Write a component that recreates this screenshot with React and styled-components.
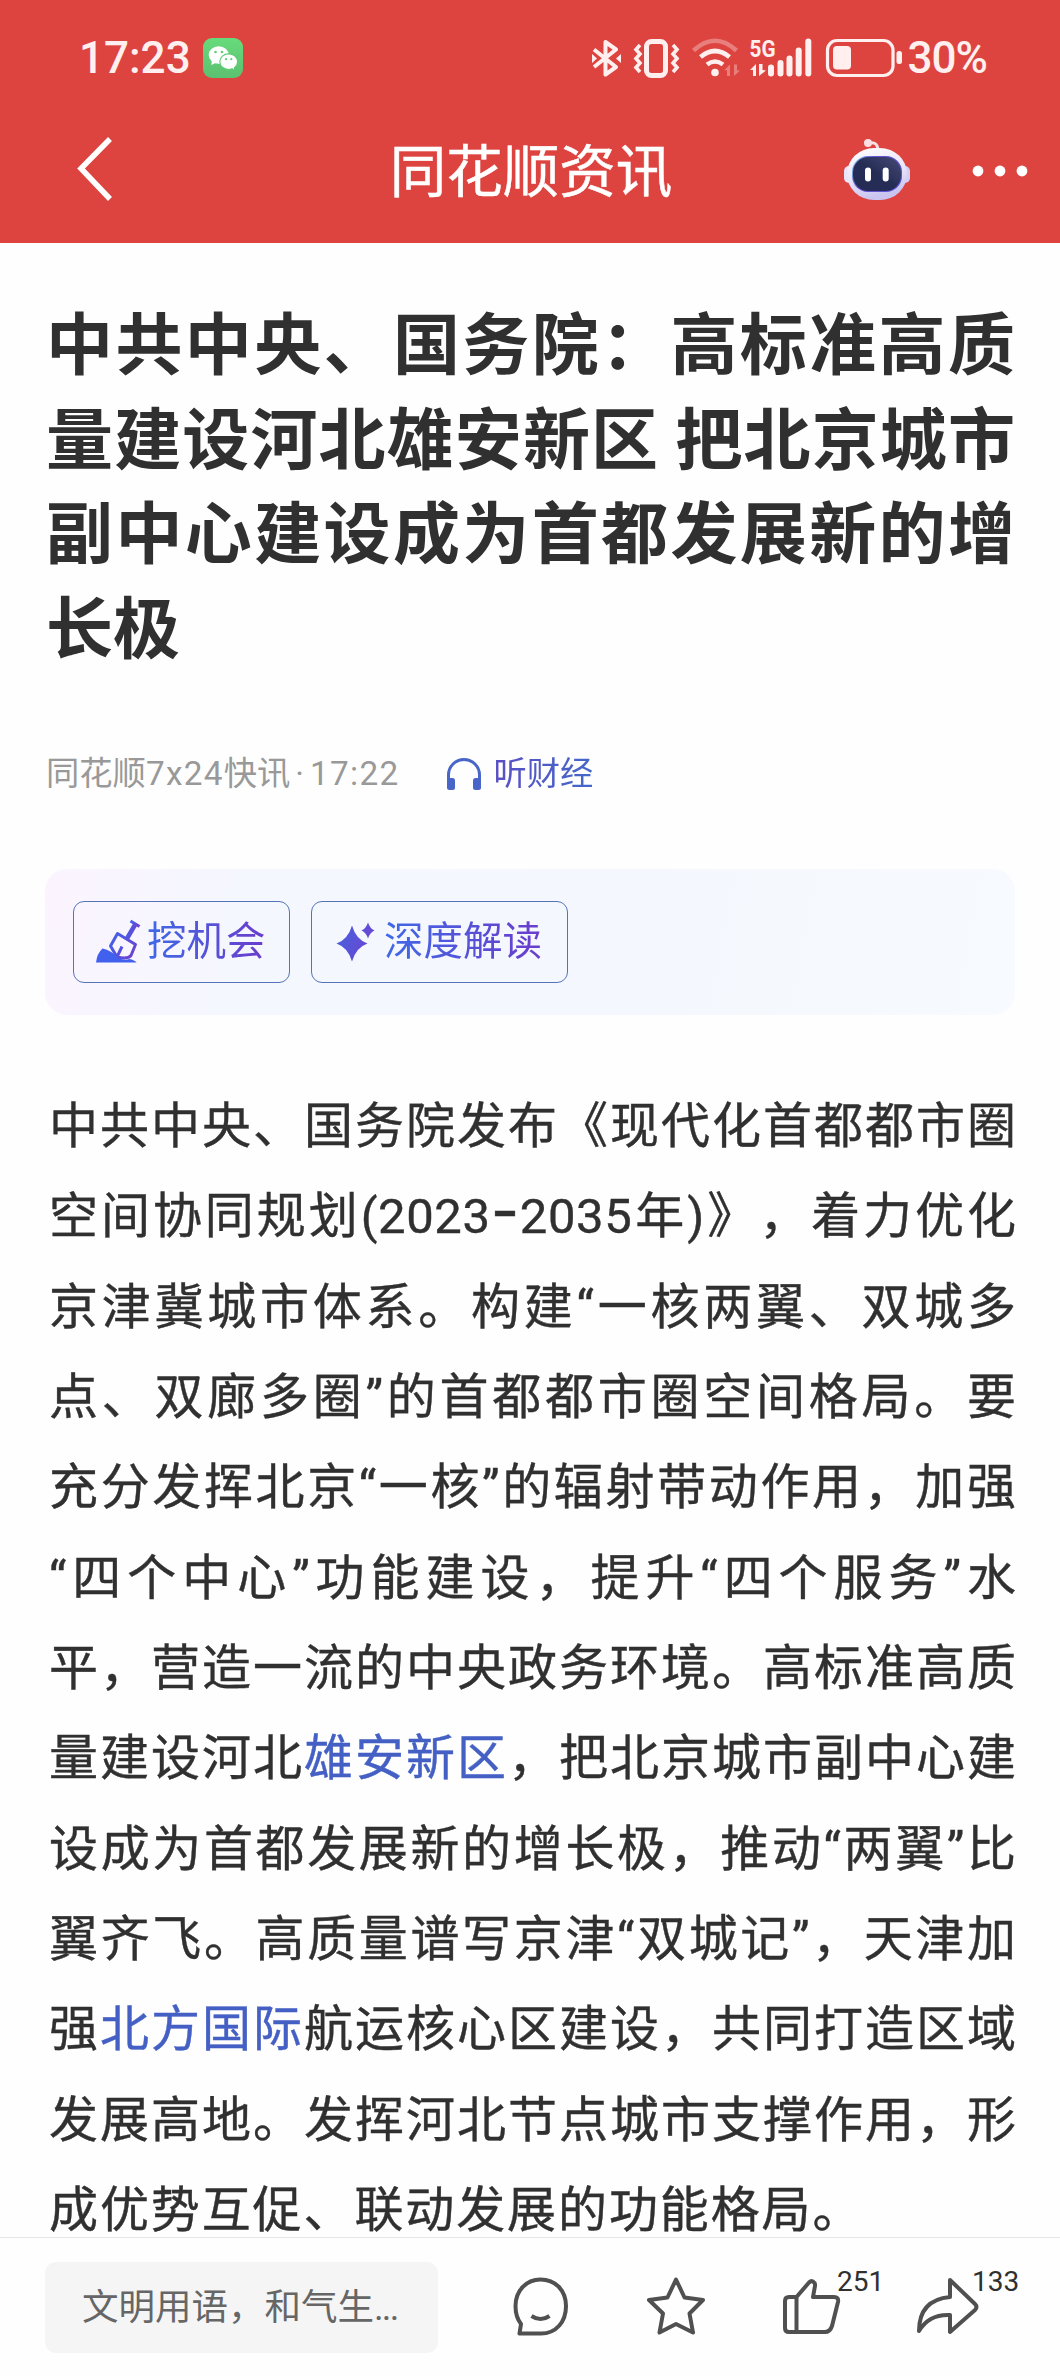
import styled, { createGlobalStyle, css } from 'styled-components'

const GlobalStyle = createGlobalStyle`
  body {
    margin: 0;
    background: #fff;
  }
  * {
    box-sizing: border-box;
  }
`

const Screen = styled.div`
  display: flex;
  flex-direction: column;
  width: 1060px;
  height: 2376px;
  overflow: hidden;
  color: #303030;
  background: #fefefe;
  font-family: Roboto, 'Noto Sans CJK SC', sans-serif;
  text-spacing-trim: space-all;
`

/* header */
const Header = styled.header`
  flex: none;
  height: 243px;
  background: #dd4440;
  color: #fff;
`

const StatusBar = styled.div`
  display: flex;
  align-items: center;
  justify-content: space-between;
  height: 116px;
  padding: 0 73px 0 79px;
`

const StatusGroup = styled.div`
  display: flex;
  align-items: center;
  color: #ffefee;
`

const StatusText = styled.span`
  font-size: 44px;
  font-weight: 500;
  line-height: 44px;
  letter-spacing: ${(props) => props.$spacing || 0}px;
`

const NavBar = styled.div`
  display: grid;
  grid-template-columns: 300px 1fr 300px;
  align-items: center;
  height: 110px;
`

const NavTitle = styled.h1`
  margin: 0;
  padding: 4px 0 0 2px;
  text-align: center;
  font-size: 56.5px;
  font-weight: 400;
  line-height: 64px;
  -webkit-text-stroke: 0.5px currentColor;
`

const NavActions = styled.div`
  display: flex;
  align-items: center;
  gap: 61px;
  padding-left: 83px;
`

const Svg = styled.svg`
  display: block;
  flex: none;
  overflow: visible;
  margin-left: ${(props) => props.$left || 0}px;
`

/* article */
const Article = styled.main`
  flex: 1;
  min-height: 0;
  padding: 50px 45px 0 46px;
`

const Line = styled.span`
  display: block;
  white-space: nowrap;
  text-align: justify;
  text-align-last: ${(props) => (props.$last ? 'left' : 'justify')};
`

const Title = styled.h2`
  margin: 0;
  color: #303030;
  font-family: 'Noto Sans CJK SC', sans-serif;
  font-size: 67px;
  font-weight: 700;
  line-height: 94.7px;
`

const Meta = styled.div`
  display: flex;
  align-items: center;
  height: 40px;
  margin-top: 82px;
  color: #999;
  font-size: 33.3px;
  line-height: 40px;
`

const MetaNumber = styled.span`
  letter-spacing: 1.3px;
`

const MetaDot = styled.span`
  margin: 0 6px 0 5px;
`

const gradientText = css`
  background: linear-gradient(90deg, ${(props) => props.$from}, ${(props) => props.$to});
  background-clip: text;
  -webkit-background-clip: text;
  color: transparent;
`

const Listen = styled.span`
  display: flex;
  align-items: center;
  gap: 11px;
  margin-left: 47px;
`

const ListenText = styled.span`
  ${gradientText}
`

const Panel = styled.div`
  display: flex;
  align-items: center;
  gap: 21px;
  width: 970px;
  height: 146px;
  margin: 75px 0 0 -1px;
  padding: 0 28px 0 28px;
  border-radius: 22px;
  background: linear-gradient(100deg, #fbf4fe 0%, #f5f7fe 20%, #f4f8fe 60%, #f7fbff 100%);
`

const PanelButton = styled.button`
  display: flex;
  align-items: center;
  width: ${(props) => props.$width}px;
  height: 82px;
  padding: 0 0 0 21px;
  border: 1.5px solid #5574b8;
  border-radius: 11px;
  background: transparent;
  font-family: inherit;
`

const PanelLabel = styled.span`
  font-size: 39.5px;
  line-height: 50px;
  ${gradientText}
`

const Body = styled.p`
  margin: 67px 0 0 3px;
  width: 967px;
  font-size: 49px;
  line-height: 90.35px;
  -webkit-text-stroke: 0.4px currentColor;
`

const Keyword = styled.a`
  color: #4460c4;
`

const Years = styled.span`
  letter-spacing: 0.6px;
`

const Dash = styled.span`
  font-family: Inter, sans-serif;
  font-size: 62px;
  line-height: 0;
`

/* bottom bar */
const BottomBar = styled.footer`
  position: relative;
  flex: none;
  display: flex;
  align-items: center;
  height: 139px;
  border-top: 1px solid #e6e6e6;
  padding-left: 45px;
  background: #fefefe;
`

const CommentInput = styled.div`
  display: flex;
  align-items: center;
  width: 393px;
  height: 91px;
  padding: 0 0 5px 37px;
  border-radius: 11px;
  background: #f5f5f5;
  color: #666;
  font-size: 36.5px;
  white-space: nowrap;
`

const Ellipsis = styled.span`
  letter-spacing: -1.8px;
`

const Action = styled.div`
  position: relative;
  margin: 0 0 2px ${(props) => props.$left}px;
`

const Count = styled.span`
  position: absolute;
  left: ${(props) => props.$x}px;
  top: -8px;
  color: #303030;
  font-size: 28px;
  line-height: 30px;
`

const titleLines = [
  '中共中央、国务院：高标准高质',
  '量建设河北雄安新区 把北京城市',
  '副中心建设成为首都发展新的增',
  '长极',
]

const bodyLines = [
  '中共中央、国务院发布《现代化首都都市圈',
  <>
    空间协同规划
    <Years>
      (2023<Dash>-</Dash>2035
    </Years>
    年)》，着力优化
  </>,
  '京津冀城市体系。构建“一核两翼、双城多',
  '点、双廊多圈”的首都都市圈空间格局。要',
  '充分发挥北京“一核”的辐射带动作用，加强',
  '“四个中心”功能建设，提升“四个服务”水',
  '平，营造一流的中央政务环境。高标准高质',
  <>
    量建设河北<Keyword>雄安新区</Keyword>，把北京城市副中心建
  </>,
  '设成为首都发展新的增长极，推动“两翼”比',
  '翼齐飞。高质量谱写京津“双城记”，天津加',
  <>
    强<Keyword>北方国际</Keyword>航运核心区建设，共同打造区域
  </>,
  '发展高地。发挥河北节点城市支撑作用，形',
  '成优势互促、联动发展的功能格局。',
]

const LastBodyLine = styled(Line)`
  letter-spacing: 1.9px;
`

function WechatIcon() {
  return (
    <Svg $left={12} width='40' height='40' viewBox='0 0 40 40'>
      <defs>
        <linearGradient id='wechat' x1='0' y1='0' x2='0' y2='1'>
          <stop offset='0' stopColor='#67db7c' />
          <stop offset='1' stopColor='#5cc070' />
        </linearGradient>
      </defs>
      <rect width='40' height='40' rx='9' fill='url(#wechat)' />
      <path d='M9 22l-.6 5 5-2.500z' fill='#fff' />
      <ellipse cx='15.700' cy='17' rx='10' ry='8.700' fill='#fff' />
      <ellipse cx='25.500' cy='23.500' rx='9.200' ry='8.200' fill='#61cd76' />
      <ellipse cx='25.700' cy='23.700' rx='8.300' ry='7.300' fill='#fff' />
      <path d='M28 29l3 2.500-.3-5z' fill='#fff' />
      <circle cx='12.500' cy='14' r='1.300' fill='#61cd76' />
      <circle cx='19' cy='14' r='1.300' fill='#61cd76' />
      <circle cx='23' cy='21.200' r='1.100' fill='#61cd76' />
      <circle cx='28.300' cy='21.200' r='1.100' fill='#61cd76' />
    </Svg>
  )
}

function StatusIcons() {
  return (
    <Svg width='314' height='48' viewBox='590 34 314 48' fill='none' stroke='#ffefee' strokeWidth='3.600'>
      {/* bluetooth */}
      <path d='M594 49.500L616 67 605.500 74.500V42L616 49.500 594 67' strokeLinejoin='round' strokeWidth='4' />
      <path d='M592 54v9l5-4.500zM621 54v9l-5-4.500z' fill='#ffefee' stroke='none' />
      {/* vibrate */}
      <rect x='646.500' y='41.500' width='19' height='34' rx='5' strokeWidth='5' />
      <path d='M640 45l-4 4.500 4 4.500-4 4.500 4 4.500-4 4.500 4 4.500M673 45l4 4.500-4 4.500 4 4.500-4 4.500 4 4.500-4 4.500' />
      {/* wifi */}
      <path d='M693.500 50.500Q715 31 736.500 50.500' strokeWidth='4.500' opacity='0.350' />
      <path d='M700.500 57Q715 45 729.500 57M707 64.500q8-6 16 0' strokeWidth='4.600' />
      <circle cx='715' cy='72.500' r='3.800' fill='#ffefee' stroke='none' />
      <path d='M724 70.500l6-6v11.500h-3v-6zM740 70.500l-6 5.500V64.500h3v6z' fill='#ffefee' stroke='none' opacity='0.350' />
      {/* data arrows and signal bars */}
      <path d='M750 70l6-6v12h-3v-6zM766 70.500l-7 5.500V64h3.500v6z' fill='#ffefee' stroke='none' />
      <path d='M771 67.500v6M780.500 63v10.500M789.500 58.500v15M798.700 50.500v23M808.300 41.500v32' strokeWidth='6' strokeLinecap='round' />
      {/* battery */}
      <rect x='827.500' y='40.500' width='65.500' height='35' rx='9.500' strokeWidth='3.200' />
      <rect x='833' y='46' width='18' height='23.500' rx='4' fill='#ffefee' stroke='none' />
      <rect x='896.500' y='51' width='5.500' height='13' rx='2.500' fill='#ffefee' stroke='none' />
      <text
        x='749.500'
        y='57'
        fill='#ffefee'
        stroke='none'
        fontFamily='Roboto, sans-serif'
        fontSize='24.500'
        fontWeight='700'
        textLength='26'
        lengthAdjust='spacingAndGlyphs'
      >
        5G
      </text>
    </Svg>
  )
}

function RobotIcon() {
  return (
    <Svg width='68' height='64' viewBox='0 0 68 64'>
      <defs>
        <linearGradient id='shell' x1='0' y1='0' x2='0.300' y2='1'>
          <stop offset='0' stopColor='#fff' />
          <stop offset='0.600' stopColor='#e9e4f8' />
          <stop offset='1' stopColor='#c9c4f0' />
        </linearGradient>
        <linearGradient id='rim' x1='0' y1='0' x2='1' y2='0.400'>
          <stop offset='0' stopColor='#79cfe6' />
          <stop offset='0.400' stopColor='#6a4fd0' />
          <stop offset='1' stopColor='#5a54d8' />
        </linearGradient>
        <linearGradient id='face' x1='0' y1='1' x2='1' y2='0'>
          <stop offset='0' stopColor='#232a55' />
          <stop offset='0.500' stopColor='#262d55' />
          <stop offset='1' stopColor='#454a76' />
        </linearGradient>
      </defs>
      <path d='M26 4q9-2 9 8' fill='none' stroke='#fbdfe2' strokeWidth='3' />
      <circle cx='25' cy='4' r='4' fill='#fbdfe2' />
      <rect x='1' y='27' width='10' height='17' rx='5' fill='#e8e4fa' />
      <rect x='57' y='27' width='10' height='17' rx='5' fill='#d5cff5' />
      <rect x='4' y='9' width='60' height='52' rx='27' fill='url(#shell)' />
      <rect x='9' y='17' width='50' height='36' rx='16' fill='url(#rim)' />
      <rect x='10' y='18' width='48' height='34' rx='15.500' fill='url(#face)' />
      <rect x='22' y='28.500' width='6' height='14' rx='3' fill='#fff' />
      <rect x='39.700' y='28.500' width='6' height='14' rx='3' fill='#fff' />
    </Svg>
  )
}

function HeadphoneIcon() {
  return (
    <Svg width='36' height='34' viewBox='0 0 36 34' fill='none' stroke='#4866c8' strokeWidth='3'>
      <path d='M2.500 29V18a15.500 15.500 0 0 1 31 0v11' />
      <rect x='1' y='21' width='8' height='12' rx='2.500' fill='#4866c8' stroke='none' />
      <rect x='27' y='21' width='8' height='12' rx='2.500' fill='#4866c8' stroke='none' />
    </Svg>
  )
}

function ShovelIcon() {
  return (
    <Svg width='52' height='46' viewBox='0 0 52 46'>
      <defs>
        <linearGradient id='shovel' x1='0' y1='0' x2='1' y2='0.600'>
          <stop offset='0' stopColor='#3f63e8' />
          <stop offset='1' stopColor='#6a45d2' />
        </linearGradient>
      </defs>
      <g fill='none' stroke='url(#shovel)' strokeWidth='3' strokeLinejoin='round'>
        <path d='M22.500 14.500L40.500 25.500l-4.500 11q-3 4-14 1.500L15.500 27zM22 38l5-10.500' />
        <path d='M35.500 2l9 5.500' />
        <path d='M32 19.500L40.500 5' strokeWidth='4.500' />
      </g>
      <path d='M1 43.500q1-9 6.500-14 9 2 16 9.500 6 3 11 1 5 1 7 3.500z' fill='#4160ee' />
    </Svg>
  )
}

function SparkleIcon() {
  return (
    <Svg width='51' height='46' viewBox='-2 0 51 46'>
      <defs>
        <linearGradient id='spark' x1='0' y1='0' x2='1' y2='0.300'>
          <stop offset='0' stopColor='#4560dc' />
          <stop offset='1' stopColor='#6a48d4' />
        </linearGradient>
      </defs>
      <path
        d='M17 6.500q4 14 15.500 18-11.500 4-15.500 18-4-14-15.500-18 11.500-4 15.500-18zM33 3.500q2 6 6.500 8-4.500 2-6.500 8-2-6-6.500-8 4.500-2 6.500-8z'
        fill='url(#spark)'
      />
    </Svg>
  )
}

const ActionSvg = ({ children, width = 62 }) => (
  <Svg
    width={width}
    height='62'
    viewBox={`0 0 ${width} 62`}
    fill='none'
    stroke='#505050'
    strokeWidth='4'
    strokeLinejoin='round'
  >
    {children}
  </Svg>
)

function App() {
  return (
    <Screen>
      <GlobalStyle />
      <Header>
        <StatusBar>
          <StatusGroup>
            <StatusText>17:23</StatusText>
            <WechatIcon />
          </StatusGroup>
          <StatusGroup>
            <StatusIcons />
            <StatusText $spacing={-1}>&#8202;30%</StatusText>
          </StatusGroup>
        </StatusBar>
        <NavBar>
          <Svg $left={75} width='38' height='66' viewBox='-1 1 38 66' fill='none' stroke='#fff' strokeWidth='5.500'>
            <path d='M34 2L5 31.500 34 62' />
          </Svg>
          <NavTitle>同花顺资讯</NavTitle>
          <NavActions>
            <RobotIcon />
            <Svg width='56' height='12' viewBox='0 0 56 12' fill='#fff'>
              <circle cx='6' cy='6' r='5.400' />
              <circle cx='28' cy='6' r='5.400' />
              <circle cx='50' cy='6' r='5.400' />
            </Svg>
          </NavActions>
        </NavBar>
      </Header>

      <Article>
        <Title>
          {titleLines.map((line, index) => (
            <Line key={index} $last={index === titleLines.length - 1}>
              {line}
            </Line>
          ))}
        </Title>
        <Meta>
          <span>
            同花顺<MetaNumber>7x24</MetaNumber>快讯<MetaDot>·</MetaDot>
            <MetaNumber>17:22</MetaNumber>
          </span>
          <Listen>
            <HeadphoneIcon />
            <ListenText $from='#5a4fc4' $to='#4468c8'>
              听财经
            </ListenText>
          </Listen>
        </Meta>
        <Panel>
          <PanelButton $width={217}>
            <ShovelIcon />
            <PanelLabel $from='#3f6ae6' $to='#6b3ccc'>
              挖机会
            </PanelLabel>
          </PanelButton>
          <PanelButton $width={257}>
            <SparkleIcon />
            <PanelLabel $from='#3f6ae6' $to='#6b3ccc'>
              深度解读
            </PanelLabel>
          </PanelButton>
        </Panel>
        <Body>
          {bodyLines.map((line, index) =>
            index === bodyLines.length - 1 ? (
              <LastBodyLine key={index} $last>
                {line}
              </LastBodyLine>
            ) : (
              <Line key={index}>{line}</Line>
            )
          )}
        </Body>
      </Article>

      <BottomBar>
        <CommentInput>
          <span>
            文明用语，和气生<Ellipsis>...</Ellipsis>
          </span>
        </CommentInput>
        {/* comment */}
        <Action $left={73}>
          <ActionSvg>
            <path d='M8.500 58.500H30C45 58.500 55 47 55 31S44 4.500 29.500 4.500 4.500 16 4.500 31q0 11 5.500 18z' />
            <path d='M20.500 41q9 6 18 0' />
          </ActionSvg>
        </Action>
        {/* favourite */}
        <Action $left={72}>
          <ActionSvg>
            <path d='M31 4.500l8.500 18 18.500 2.500-13.500 13.500 3.500 19L31 49 14.500 57.500l3.500-19L4 25l18.500-2.500z' />
          </ActionSvg>
        </Action>
        {/* like */}
        <Action $left={75}>
          <ActionSvg>
            <path d='M14.500 22L27 7.500q2.500-2.500 4.500-.5 2 1 1.500 4l-2 11h21q5 0 4 5l-6 24q-2 6-7 6H7q-4 0-4-4V26q0-4 4-4zM14.500 22v35' />
          </ActionSvg>
          <Count $x={55}>251</Count>
        </Action>
        {/* share */}
        <Action $left={71}>
          <ActionSvg width={66}>
            <path d='M35 5L60 29q3 3 0 6L35 57V40Q14 39 4 56 4 25 35 22z' />
          </ActionSvg>
          <Count $x={57}>133</Count>
        </Action>
      </BottomBar>
    </Screen>
  )
}

export default App
